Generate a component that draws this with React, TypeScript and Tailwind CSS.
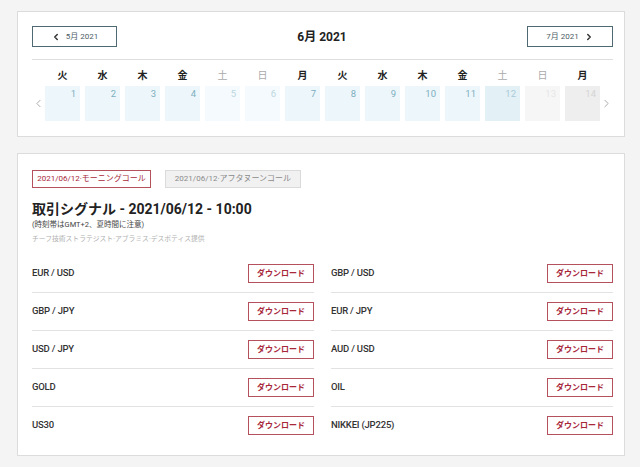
import { ChevronLeft, ChevronRight } from 'lucide-react';

const FONT = { fontFamily: 'Roboto, "Noto Sans CJK JP", sans-serif' };

type Day = { name: string; num: number; kind: 'wd' | 'we' | 'sel' | 'off1' | 'off2' };

const DAYS: Day[] = [
  { name: '火', num: 1, kind: 'wd' },
  { name: '水', num: 2, kind: 'wd' },
  { name: '木', num: 3, kind: 'wd' },
  { name: '金', num: 4, kind: 'wd' },
  { name: '土', num: 5, kind: 'we' },
  { name: '日', num: 6, kind: 'we' },
  { name: '月', num: 7, kind: 'wd' },
  { name: '火', num: 8, kind: 'wd' },
  { name: '水', num: 9, kind: 'wd' },
  { name: '木', num: 10, kind: 'wd' },
  { name: '金', num: 11, kind: 'wd' },
  { name: '土', num: 12, kind: 'sel' },
  { name: '日', num: 13, kind: 'off1' },
  { name: '月', num: 14, kind: 'off2' },
];

const cellClass: Record<Day['kind'], string> = {
  wd: 'bg-[#edf7fb] text-[#7eaebe]',
  we: 'bg-[#f4fafd] text-[#bcd7e0]',
  sel: 'bg-[#e3f0f6] text-[#aacbd7]',
  off1: 'bg-[#f6f6f6] text-[#e6e6e6]',
  off2: 'bg-[#eeeeee] text-[#d4d4d4]',
};

const LEFT = ['EUR / USD', 'GBP / JPY', 'USD / JPY', 'GOLD', 'US30'];
const RIGHT = ['GBP / USD', 'EUR / JPY', 'AUD / USD', 'OIL', 'NIKKEI (JP225)'];

function PairList({ items }: { items: string[] }) {
  return (
    <div className="flex-1 flex flex-col">
      {items.map((p, i) => (
        <div
          key={p}
          className={`flex items-center justify-between py-[9px] ${i < items.length - 1 ? 'border-b border-[#e2e2e2]' : ''}`}
        >
          <span className="text-[9.5px] font-medium text-[#333] tracking-[-0.2px]">{p}</span>
          <button className="w-[66px] h-[19px] border border-[#b4515c] text-[8px] font-semibold text-[#a8283a] bg-white">
            ダウンロード
          </button>
        </div>
      ))}
    </div>
  );
}

export default function App() {
  return (
    <div className="min-h-[467px] bg-[#f4f4f4] pt-[11px] pl-[17px]" style={FONT}>
      {/* Calendar */}
      <div className="w-[608px] bg-white border border-[#dcdcdc] pl-[14px] pr-[11px] pt-[14px] pb-[15px]">
        <div className="flex items-center justify-between pb-[12px] border-b border-[#dedede]">
          <button className="w-[85px] h-[21px] border border-[#4f6973] flex items-center justify-center gap-[5px] text-[8px] text-[#4d5d66]">
            <ChevronLeft size={10} strokeWidth={3.5} className="text-[#333]" />
            5月 2021
          </button>
          <div className="text-[12px] font-bold text-[#222]">6月 2021</div>
          <button className="w-[86px] h-[21px] border border-[#4f6973] flex items-center justify-center gap-[5px] text-[8px] text-[#4d5d66]">
            7月 2021
            <ChevronRight size={10} strokeWidth={3.5} className="text-[#333]" />
          </button>
        </div>

        <div className="flex items-end mt-[9px]">
          <div className="w-[13px] h-[35px] flex items-center justify-start text-[#999]">
            <ChevronLeft size={13} strokeWidth={1.5} />
          </div>
          <div className="grid grid-cols-[repeat(14,35px)] gap-x-[5px] gap-y-[3px]">
            {DAYS.map((d, i) => (
              <div
                key={'n' + i}
                className={`text-center text-[10px] font-bold leading-[14px] ${d.kind === 'we' || d.kind === 'sel' || d.kind === 'off1' ? 'text-[#aaaaaa] font-normal' : 'text-[#222]'}`}
              >
                {d.name}
              </div>
            ))}
            {DAYS.map((d) => (
              <div key={d.num} className={`h-[35px] text-right pr-[4px] pt-[1px] text-[9.5px] ${cellClass[d.kind]}`}>
                {d.num}
              </div>
            ))}
          </div>
          <div className="w-[13px] h-[35px] flex items-center justify-end text-[#999]">
            <ChevronRight size={13} strokeWidth={1.5} />
          </div>
        </div>
      </div>

      {/* Signals */}
      <div className="mt-[16px] w-[608px] bg-white border border-[#dcdcdc] pl-[14px] pr-[11px] pt-[16px] pb-[11px]">
        <div className="flex gap-[14px]">
          <div className="w-[119px] h-[18px] border border-[#b4515c] flex items-center justify-center text-[8px] text-[#a8283a]">
            2021/06/12·モーニングコール
          </div>
          <div className="w-[136px] h-[18px] border border-[#dadada] bg-[#f1f1f1] flex items-center justify-center text-[8px] text-[#8a8a8a]">
            2021/06/12·アフタヌーンコール
          </div>
        </div>

        <h1 className="mt-[12px] text-[14px] font-bold text-[#222] leading-[18px]">
          取引シグナル - 2021/06/12 - 10:00
        </h1>
        <div className="text-[7.5px] text-[#444] leading-[11px] mt-[1px]">(時刻帯はGMT+2、夏時間に注意)</div>
        <div className="mt-[4px] text-[6.8px] text-[#b0b0b0] leading-[10px]">
          チーフ技術ストラテジスト·アブラミス·デスポティス提供
        </div>

        <div className="mt-[11px] flex gap-[17px]">
          <PairList items={LEFT} />
          <PairList items={RIGHT} />
        </div>
      </div>
    </div>
  );
}
